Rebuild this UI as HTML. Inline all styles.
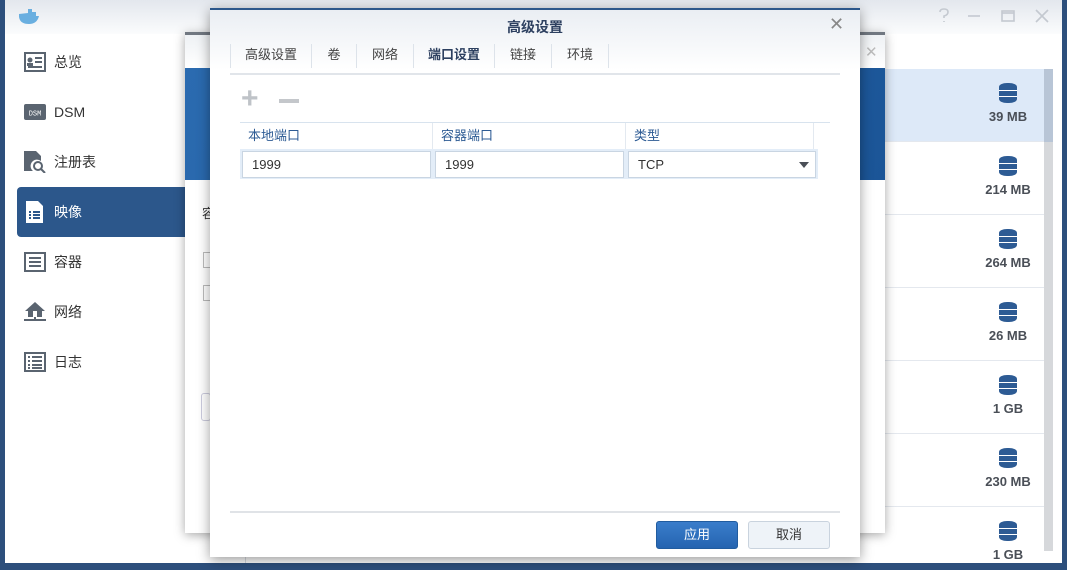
<!DOCTYPE html>
<html><head><meta charset="utf-8"><style>
*{margin:0;padding:0;box-sizing:border-box}
html,body{width:1067px;height:570px;overflow:hidden}
body{background:#2d4f7c;font-family:"Liberation Sans","Noto Sans CJK SC",sans-serif;position:relative;font-size:13px;color:#333}
.abs{position:absolute}
#win{left:5px;top:0;width:1057px;height:563px;background:#fff;overflow:hidden}
#top{left:5px;top:0;width:1057px;height:34px;background:linear-gradient(#e3e7ed,#fbfcfd)}
.nav{left:24px;height:50px;width:160px;display:flex;align-items:center;font-size:14px;color:#333}
.nav svg{margin-right:8px}
.sel{left:17px;top:187px;width:180px;height:50px;background:#2c578b;border-radius:4px 0 0 4px}
.row{left:880px;width:159px;height:73px;border-bottom:1px solid #e4e8ee}
.db{position:absolute;right:27px;top:14px;width:18px;height:20px;background:#2d5b94;border-radius:8px/4px}
.db:before,.db:after{content:"";position:absolute;left:0;right:0;height:1px;background:#fff}
.db:before{top:7px}.db:after{top:13px}
.sz{position:absolute;right:6px;top:40px;font-weight:bold;color:#4a4f57;font-size:13px;width:60px;text-align:center}
#mid{left:185px;top:32px;width:700px;height:501px;background:#fff;box-shadow:0 2px 10px rgba(0,0,0,.35);border-top:3px solid #707780}
#dlg{left:210px;top:8px;width:650px;height:549px;background:#fff;box-shadow:0 3px 12px rgba(0,0,0,.4);border-top:2px solid #2c578b}
.tab{position:absolute;top:34px;height:24px;line-height:22px;font-size:13px;color:#444;border-right:1px solid #dde3ea;text-align:center}
.inp{position:absolute;top:141px;height:27px;border:1px solid #c9d5e2;background:#fff;padding-left:9px;line-height:25px;font-size:13px;color:#333}
.th{position:absolute;top:113px;height:27px;line-height:26px;padding-left:8px;color:#2d5b94;font-size:13px;border-right:1px solid #e3e9f0}
.btn{position:absolute;top:511px;width:82px;height:28px;border-radius:3px;text-align:center;line-height:26px;font-size:13px}
</style></head><body>
<div id="win" class="abs">
<div class="abs" style="left:0;top:0;width:1057px;height:34px;background:linear-gradient(#e3e7ed,#fbfcfd)"></div>
<div class="row abs" style="top:69px;background:#dde9f8"><div class="db"></div><div class="sz">39 MB</div></div>
<div class="row abs" style="top:142px"><div class="db"></div><div class="sz">214 MB</div></div>
<div class="row abs" style="top:215px"><div class="db"></div><div class="sz">264 MB</div></div>
<div class="row abs" style="top:288px"><div class="db"></div><div class="sz">26 MB</div></div>
<div class="row abs" style="top:361px"><div class="db"></div><div class="sz">1 GB</div></div>
<div class="row abs" style="top:434px"><div class="db"></div><div class="sz">230 MB</div></div>
<div class="row abs" style="top:507px"><div class="db"></div><div class="sz">1 GB</div></div>
<div class="abs" style="left:1039px;top:69px;width:9px;height:482px;background:#d6d8db"></div>
<div class="abs" style="left:1039px;top:69px;width:9px;height:73px;background:#b8c5d6"></div>
<div class="abs" style="left:240px;top:540px;width:1px;height:23px;background:#d9dde3"></div>
</div>
<svg class="abs" style="left:17px;top:8px" width="24" height="18" viewBox="0 0 24 18"><path d="M2 9 Q3 16 12 16 Q20 16 22 8 L19 8 L19 4 L15 4 L15 1 L11 1 L11 5 L2 6 Z" fill="#6aafe0"/></svg>
<svg class="abs" style="left:938px;top:8px" width="115" height="16" viewBox="0 0 115 16" fill="none" stroke="#c4c9d0" stroke-width="1.6"><path d="M2 4 Q2 1 6 1 Q10 1 10 4 Q10 7 6 8 L6 10 M6 13 L6 14"/><path d="M30 8 H42"/><rect x="64" y="3" width="12" height="10"/><path d="M64 5 H76"/><path d="M98 2 L110 14 M110 2 L98 14"/></svg>
<div class="sel abs"></div>
<div class="nav abs" style="top:37px"><svg width="22" height="20" viewBox="0 0 22 20"><rect x="1" y="1" width="20" height="18" fill="none" stroke="#5a6470" stroke-width="2"/><circle cx="6" cy="8" r="2.5" fill="#5a6470"/><rect x="3" y="11" width="6" height="3" fill="#5a6470"/><path d="M11 6H18M11 10H18M4 15H18" stroke="#5a6470" stroke-width="2"/></svg>总览</div>
<div class="nav abs" style="top:87px"><svg width="22" height="20" viewBox="0 0 22 20"><rect x="0" y="2" width="22" height="16" rx="2" fill="#5a6470"/><text x="11" y="13.5" font-size="7" fill="#fff" text-anchor="middle" font-family="Liberation Mono">DSM</text></svg>DSM</div>
<div class="nav abs" style="top:137px"><svg width="22" height="22" viewBox="0 0 22 22"><path d="M0 0H12L17 5V10A6 6 0 0 0 9 20H0Z" fill="#5a6470"/><circle cx="14" cy="15" r="4" fill="none" stroke="#5a6470" stroke-width="2"/><path d="M17 18L21 22" stroke="#5a6470" stroke-width="2"/></svg>注册表</div>
<div class="nav abs" style="top:187px;color:#fff"><svg width="22" height="22" viewBox="0 0 22 22"><path d="M2 0H14L19 5V22H2Z" fill="#fff"/><path d="M5 11H7M9 11H16M5 14H7M9 14H16M5 17H7M9 17H16" stroke="#2c578b" stroke-width="2"/></svg>映像</div>
<div class="nav abs" style="top:237px"><svg width="22" height="20" viewBox="0 0 22 20"><rect x="1" y="1" width="20" height="18" fill="none" stroke="#5a6470" stroke-width="2"/><path d="M5 6H17M5 10H17M5 14H17" stroke="#5a6470" stroke-width="2"/><path d="M0 19H22" stroke="#5a6470" stroke-width="2"/></svg>容器</div>
<div class="nav abs" style="top:287px"><svg width="22" height="22" viewBox="0 0 22 22"><path d="M11 1L1 10H4V16H18V10H21Z" fill="#5a6470"/><rect x="9" y="10" width="4" height="6" fill="#fff"/><path d="M0 19H22M11 16V19" stroke="#5a6470" stroke-width="2"/></svg>网络</div>
<div class="nav abs" style="top:337px"><svg width="22" height="20" viewBox="0 0 22 20"><rect x="1" y="1" width="20" height="18" fill="none" stroke="#5a6470" stroke-width="2"/><path d="M4 5H6M8 5H18M4 9H6M8 9H18M4 13H6M8 13H18M4 16H6M8 16H18" stroke="#5a6470" stroke-width="2"/></svg>日志</div>
<div id="mid" class="abs">
 <div class="abs" style="left:0;top:0;width:700px;height:33px;background:linear-gradient(#eef1f4,#fff)"></div>
 <div class="abs" style="left:0;top:33px;width:700px;height:112px;background:linear-gradient(120deg,#2b6bb0,#1b5597)"></div>
 <div class="abs" style="left:17px;top:168px;font-size:13px">容</div>
 <div class="abs" style="left:18px;top:217px;width:8px;height:16px;border:1px solid #bbb"></div>
 <div class="abs" style="left:18px;top:250px;width:8px;height:16px;border:1px solid #bbb"></div>
 <div class="abs" style="left:16px;top:358px;width:10px;height:28px;border:1px solid #ccd;border-radius:3px"></div>
 <div class="abs" style="left:680px;top:8px;color:#bbb;font-size:15px">✕</div>
</div>
<div id="dlg" class="abs">
 <div class="abs" style="left:0;top:0;width:650px;height:60px;background:linear-gradient(#eaeef3,#fff)"></div>
 <div class="abs" style="left:0;top:7px;width:650px;text-align:center;font-size:14px;font-weight:bold;color:#2d4060">高级设置</div>
 <div class="abs" style="left:619px;top:4px;font-size:18px;color:#888">✕</div>
 <div class="abs" style="left:20px;top:34px;width:1px;height:24px;background:#dde3ea"></div>
 <div class="tab" style="left:21px;width:81px">高级设置</div>
 <div class="tab" style="left:102px;width:45px">卷</div>
 <div class="tab" style="left:147px;width:57px">网络</div>
 <div class="tab" style="left:204px;width:81px;color:#2d4060;font-weight:bold">端口设置</div>
 <div class="tab" style="left:285px;width:57px">链接</div>
 <div class="tab" style="left:342px;width:57px">环境</div>
 <div class="abs" style="left:20px;top:63px;width:610px;height:2px;background:#e1e5ea"></div>
 <div class="abs" style="left:31px;top:78px;font-size:30px;line-height:22px;color:#bfc3c8;font-weight:bold">+</div>
 <div class="abs" style="left:69px;top:89px;width:20px;height:4px;background:#c4c7cb"></div>
 <div class="abs" style="left:30px;top:112px;width:590px;height:1px;background:#d8e3ee"></div>
 <div class="th" style="left:30px;width:193px">本地端口</div>
 <div class="th" style="left:223px;width:193px">容器端口</div>
 <div class="th" style="left:416px;width:188px">类型</div>
 <div class="abs" style="left:30px;top:139px;width:578px;height:30px;background:#e3edf8"></div>
 <div class="inp" style="left:32px;width:189px">1999</div>
 <div class="inp" style="left:225px;width:189px">1999</div>
 <div class="inp" style="left:418px;width:188px">TCP<span style="position:absolute;right:6px;top:10px;border:5px solid transparent;border-top:6px solid #4a4f57;border-bottom:0"></span></div>
 <div class="abs" style="left:20px;top:501px;width:610px;height:2px;background:#e0e3e7"></div>
 <div class="btn" style="left:446px;background:linear-gradient(#3a7dcb,#2564b0);color:#fff;border:1px solid #215c9f">应用</div>
 <div class="btn" style="left:538px;background:#eef3f8;color:#333;border:1px solid #c9d3de">取消</div>
</div>
</body></html>
